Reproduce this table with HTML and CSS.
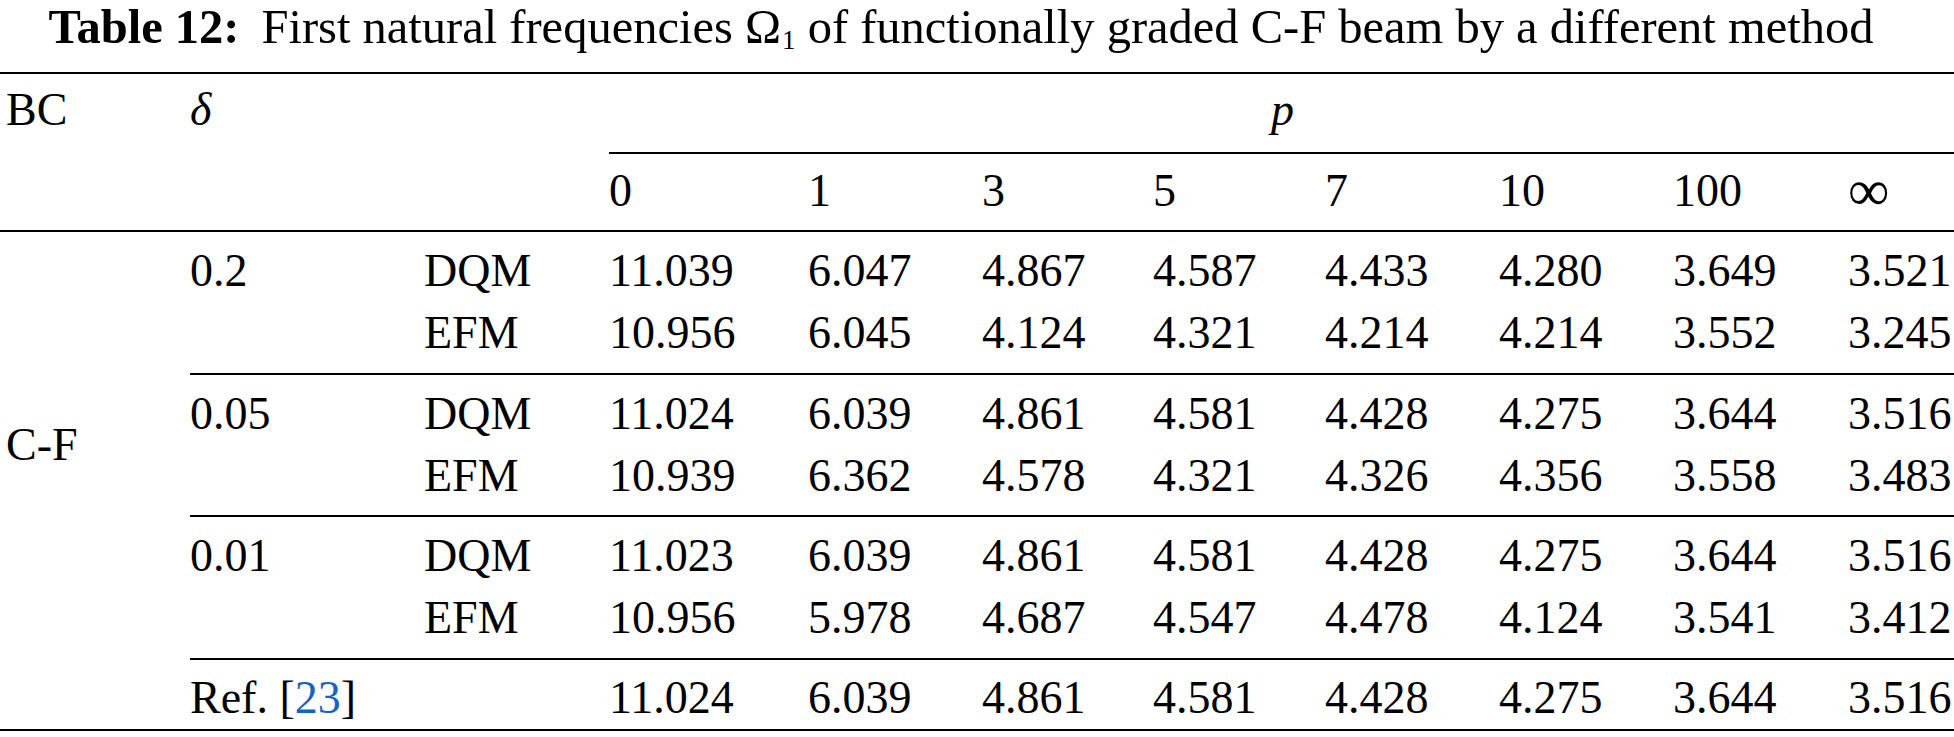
FILE: index.html
```html
<!DOCTYPE html>
<html>
<head>
<meta charset="utf-8">
<link rel="stylesheet" href="styles.css">
</head>
<body>
<div class="caption"><b>Table 12:</b><span class="gap"></span>First natural frequencies Ω<sub>1</sub> of functionally graded C-F beam by a different method</div>
<div class="tbl">
  <div class="row h1">
    <div class="c1">BC</div>
    <div class="c2"><i>δ</i></div>
    <div class="pspan"><i>p</i></div>
  </div>
  <div class="prule"></div>
  <div class="row h2">
    <div class="c4">0</div><div>1</div><div>3</div><div>5</div><div>7</div><div>10</div><div>100</div><div class="inf">∞</div>
  </div>
  <div class="rule full"></div>

  <div class="cf">C-F</div>

  <div class="row first">
    <div class="c2">0.2</div><div>DQM</div><div>11.039</div><div>6.047</div><div>4.867</div><div>4.587</div><div>4.433</div><div>4.280</div><div>3.649</div><div>3.521</div>
  </div>
  <div class="row last">
    <div class="c3">EFM</div><div>10.956</div><div>6.045</div><div>4.124</div><div>4.321</div><div>4.214</div><div>4.214</div><div>3.552</div><div>3.245</div>
  </div>
  <div class="rule part"></div>

  <div class="row first">
    <div class="c2">0.05</div><div>DQM</div><div>11.024</div><div>6.039</div><div>4.861</div><div>4.581</div><div>4.428</div><div>4.275</div><div>3.644</div><div>3.516</div>
  </div>
  <div class="row last">
    <div class="c3">EFM</div><div>10.939</div><div>6.362</div><div>4.578</div><div>4.321</div><div>4.326</div><div>4.356</div><div>3.558</div><div>3.483</div>
  </div>
  <div class="rule part"></div>

  <div class="row first">
    <div class="c2">0.01</div><div>DQM</div><div>11.023</div><div>6.039</div><div>4.861</div><div>4.581</div><div>4.428</div><div>4.275</div><div>3.644</div><div>3.516</div>
  </div>
  <div class="row last">
    <div class="c3">EFM</div><div>10.956</div><div>5.978</div><div>4.687</div><div>4.547</div><div>4.478</div><div>4.124</div><div>3.541</div><div>3.412</div>
  </div>
  <div class="rule part"></div>

  <div class="row refrow">
    <div class="c2">Ref. [<span class="cite">23</span>]</div><div class="c4">11.024</div><div>6.039</div><div>4.861</div><div>4.581</div><div>4.428</div><div>4.275</div><div>3.644</div><div>3.516</div>
  </div>
</div>
</body>
</html>
```
FILE: styles.css
```css
html, body {
  margin: 0;
  padding: 0;
  background: #ffffff;
}
body {
  font-family: "Liberation Serif", "Times New Roman", serif;
  font-size: 46px;
  color: #000000;
  width: 1954px;
  overflow: hidden;
}
.caption {
  font-size: 48.5px;
  text-align: center;
  line-height: 54px;
  height: 54px;
  padding-bottom: 18px;
  padding-right: 32px;
  white-space: nowrap;
}
.caption b {
  font-weight: bold;
}
.caption .gap {
  display: inline-block;
  width: 22px;
}
.caption sub {
  font-size: 27px;
  vertical-align: -6px;
  line-height: 0;
  margin-left: 1px;
}
.tbl {
  display: grid;
  grid-template-columns: 190px 234px 185px 199px 174px 171px 172px 174px 174px 175px 1fr;
  border-top: 2px solid #000;
  border-bottom: 2px solid #000;
  line-height: 62px;
}
.row {
  display: contents;
}
.c1 {
  grid-column: 1;
  padding-left: 6px;
}
.c2 {
  grid-column: 2;
}
.c3 {
  grid-column: 3;
}
.c4 {
  grid-column: 4;
}
.pspan {
  grid-column: 4 / -1;
  text-align: center;
  padding-left: 2px;
}
.h1 > * {
  padding-top: 5px;
  padding-bottom: 11px;
}
.h2 > * {
  padding-top: 6px;
  padding-bottom: 8px;
}
.h2 > .inf {
  font-size: 58px;
  line-height: 62px;
  height: 62px;
}
.prule {
  grid-column: 4 / -1;
  height: 2px;
  background: #000;
}
.rule {
  height: 2px;
  background: #000;
}
.rule.full {
  grid-column: 1 / -1;
}
.rule.part {
  grid-column: 2 / -1;
}
.first > * {
  padding-top: 8px;
}
.last > * {
  padding-bottom: 8.5px;
}
.refrow > * {
  padding-top: 7px;
  padding-bottom: 0.5px;
}
.cf {
  grid-column: 1;
  grid-row: 5 / 13;
  align-self: center;
  padding-left: 6px;
}
.cite {
  color: #1565c0;
}
```
